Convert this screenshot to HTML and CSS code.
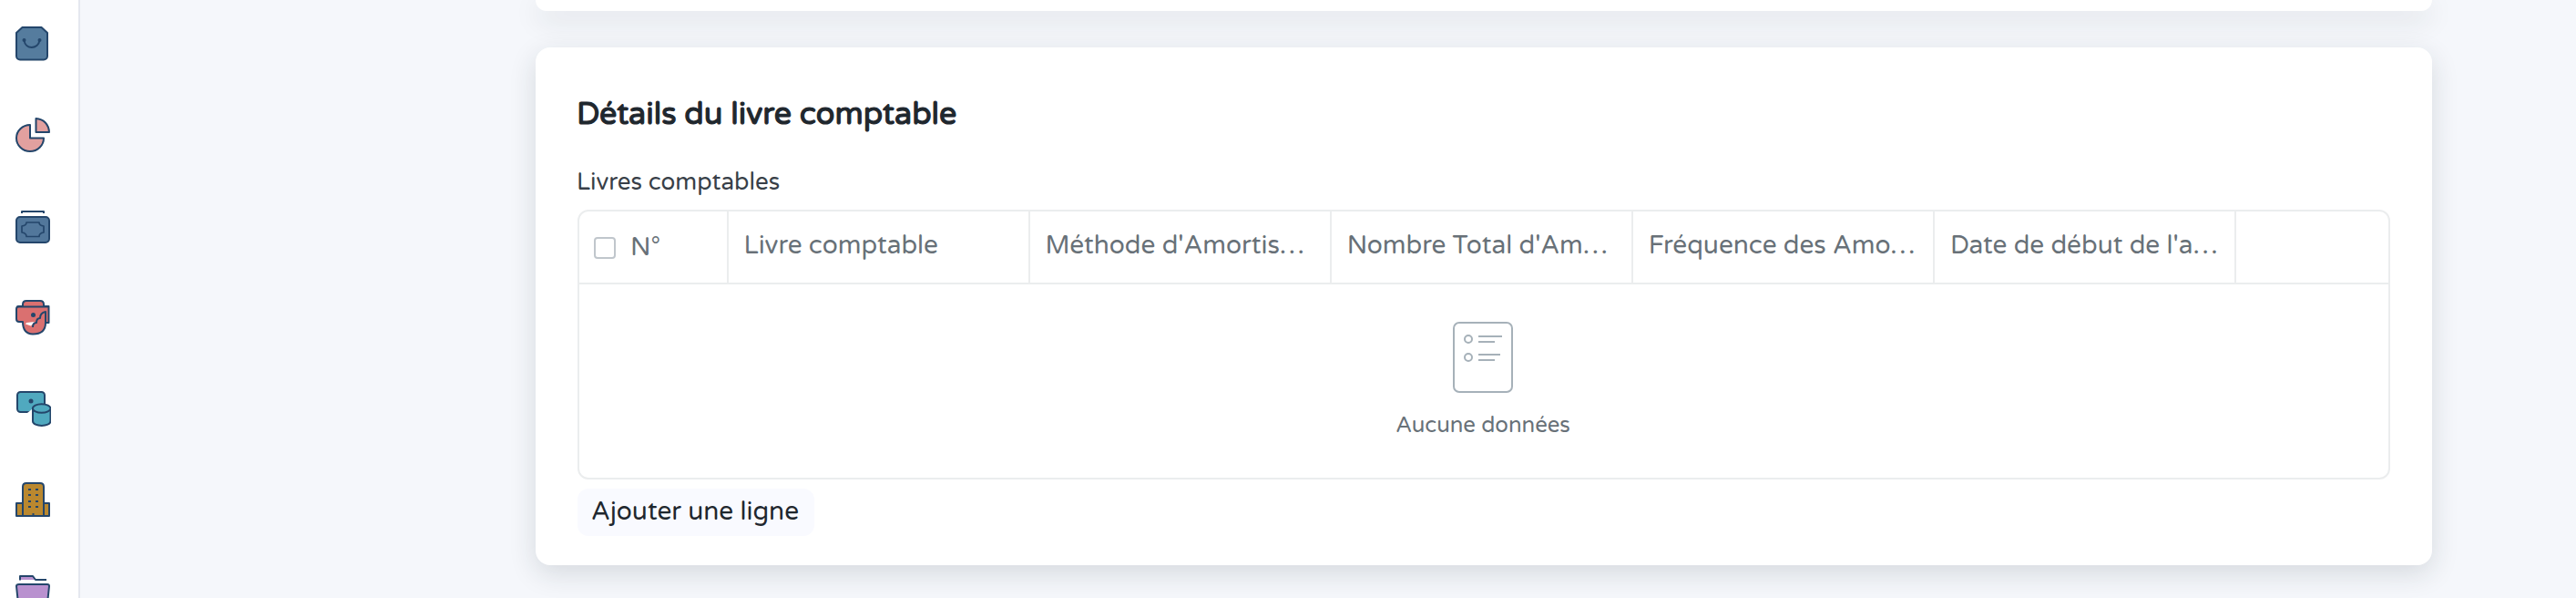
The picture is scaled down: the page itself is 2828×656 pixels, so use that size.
FILE: index.html
```html
<!DOCTYPE html>
<html lang="fr">
<head>
<meta charset="utf-8">
<title>Détails du livre comptable</title>
<link rel="stylesheet" href="styles.css">
</head>
<body>
<div class="app">
  <nav class="sidebar">
    <svg class="nav-icon" viewBox="0 0 40 40"><path fill="#557c9e" d="M8.500 2h21L36 8v25.500a4 4 0 0 1-4 4H6a4 4 0 0 1-4-4V8z"/><path fill="none" d="M10.500 16c1 10.500 15.500 10.500 17 0"/><circle class="dot" cx="10.500" cy="16" r="2"/><circle class="dot" cx="27.500" cy="16" r="2"/></svg>
    <svg class="nav-icon" viewBox="0 0 40 40"><path fill="#e2a09f" d="M17 9v14.500h15A15 14.500 0 1 1 17 9z"/><path fill="#e2a09f" d="M23.500 2v15H38C37.500 8.500 32 2.500 23.500 2z"/></svg>
    <svg class="nav-icon" viewBox="0 0 40 40"><path fill="none" d="M8 6V4h24v2"/><rect fill="#52779b" x="2" y="10" width="36" height="28" rx="4"/><path fill="none" stroke-width="1.700" d="M13 16h14q0 3.500 5 4v7q-5 .500-5 4.500H13q0-4-5-4.500v-7q5-.500 5-4z"/></svg>
    <svg class="nav-icon" viewBox="0 0 40 40"><path fill="#da7070" d="M9 8V6q0-4 4-4h15q4 0 4 4v2h5.500v18H34q0 12.500-14 12.500Q9 38 9 25H5q-3 0-3-3V11q0-3 3-3z"/><path fill="#fff" stroke="none" d="M13 26l9-1-4 4.500-6-2z"/><path fill="none" d="M20 31c0-3 1-5 4-5 0-3 1-5 4-5 0-3 1-6 6-7v12M2.500 8.500H37"/><circle class="dot" cx="20.500" cy="17.500" r="2.500"/></svg>
    <svg class="nav-icon" viewBox="0 0 40 40"><rect fill="#50a9bf" x="3" y="2" width="30" height="22" rx="3.500"/><path fill="#fff" stroke="none" d="M14 25l5-4v5z"/><circle class="dot" cx="18" cy="12" r="2.500"/><path fill="#50a9bf" d="M20 20v14c0 6.500 19.500 6.500 19.500 0V20"/><ellipse fill="#50a9bf" cx="29.700" cy="20" rx="9.800" ry="4.800"/></svg>
    <svg class="nav-icon" viewBox="0 0 40 40"><path fill="#ba882f" d="M2 38V24h6l1-1h22l1 1h6v14z"/><path fill="#ba882f" d="M9 38V6q0-4 4-4h15q4 0 4 4v32z"/><path fill="none" d="M15 9h3M23 9h3M15 15h3M23 15h3M15 22h3M23 22h3M15 28h3M23 28h3M20.500 35v3"/></svg>
    <svg class="nav-icon" viewBox="0 0 40 40"><path fill="#b991cf" stroke="none" d="M6 4h14l3.500 4H6z"/><path fill="none" d="M6 8.500V4h14l3 4h12"/><path fill="#b991cf" d="M5 13h31q2 0 2 2l-2 19q0 4-4 4H8q-4 0-4-4L2 15q0-2 3-2z"/></svg>
  </nav>
  <main class="content">
    <section class="card card-previous"></section>
    <section class="card">
      <h2 class="title">Détails du livre comptable</h2>
      <div class="label">Livres comptables</div>
      <div class="grid">
        <div class="grid-head">
          <div class="cell cell-index"><span class="checkbox"></span><span>N°</span></div>
          <div class="cell">Livre comptable</div>
          <div class="cell">Méthode d'Amortis…</div>
          <div class="cell">Nombre Total d'Am…</div>
          <div class="cell">Fréquence des Amo…</div>
          <div class="cell">Date de début de l'a…</div>
          <div class="cell cell-last"></div>
        </div>
        <div class="grid-empty">
          <svg class="empty-icon" viewBox="0 0 66 78"><rect x="1" y="1" width="64" height="76" rx="6"/><circle cx="17" cy="19" r="4"/><circle cx="17" cy="39" r="4"/><path d="M28 16h26M28 22h18M28 36h24M28 42h18"/></svg>
          <span>Aucune données</span>
        </div>
      </div>
      <button class="add-row">Ajouter une ligne</button>
    </section>
  </main>
</div>
</body>
</html>
```
FILE: styles.css
```css
* { box-sizing: border-box; }
body {
  margin: 0;
  background: #f5f7fb;
  color: #1f272e;
  font-family: "Varela Round", "Noto Sans", sans-serif;
}
.app { display: flex; height: 656px; overflow: hidden; }
.sidebar {
  display: flex;
  flex: 0 0 88px;
  flex-direction: column;
  gap: 60px;
  padding: 28px 0 0 16px;
  background: #fff;
  border-right: 2px solid #e5e8ef;
}
.nav-icon {
  flex: none;
  width: 40px;
  height: 40px;
  stroke: #24466b;
  stroke-width: 2;
  stroke-linejoin: round;
}
.nav-icon .dot { fill: #24466b; stroke: none; }
.content {
  display: flex;
  flex: 1;
  flex-direction: column;
  gap: 40px;
  padding-left: 500px;
}
.card {
  flex: none;
  width: 2082px;
  height: 568px;
  padding: 49px 46px 0;
  background: #fff;
  border-radius: 16px;
  box-shadow: 0 9px 30px rgba(25, 39, 52, 0.14);
}
.card-previous { height: 12px; padding: 0; border-radius: 0 0 16px 16px; }
.title {
  height: 50px;
  margin: 0 0 0 -1px;
  font-size: 34px;
  font-weight: 400;
  line-height: 50px;
  white-space: nowrap;
  -webkit-text-stroke: 1.2px #1f272e;
}
.label {
  height: 40px;
  margin: 29px 0 10px -1px;
  color: #383f48;
  font-size: 26px;
  line-height: 40px;
  white-space: nowrap;
}
.grid {
  height: 296px;
  border: 2px solid #ebedee;
  border-radius: 12px;
}
.grid-head {
  display: grid;
  grid-template-columns: 164px repeat(5, 331.1px) 1fr;
  height: 80px;
  border-bottom: 2px solid #ebedee;
}
.cell {
  display: flex;
  align-items: center;
  padding: 0 0 4px 16.500px;
  border-right: 2px solid #ebedee;
  color: #687178;
  font-size: 28px;
  line-height: 38px;
  white-space: nowrap;
}
.cell-index { gap: 16px; padding: 0 0 0 16px; }
.cell-last { border-right: 0; }
.checkbox {
  width: 24px;
  height: 24px;
  margin-top: 2px;
  border: 2px solid #c0c6cc;
  border-radius: 4px;
}
.grid-empty {
  display: flex;
  flex-direction: column;
  align-items: center;
  gap: 19px;
  padding: 41px 2px 0 0;
  color: #687178;
  font-size: 24px;
  line-height: 34px;
}
.empty-icon {
  width: 66px;
  height: 78px;
  fill: none;
  stroke: #a6b1b9;
  stroke-width: 2;
}
.add-row {
  display: block;
  width: 260px;
  height: 52px;
  margin: 10px 0 0;
  padding: 0 0 1px 15px;
  background: #f9faff;
  border: 0;
  border-radius: 12px;
  color: #1f272e;
  font: 28px/49px "Varela Round", "Noto Sans", sans-serif;
  text-align: left;
  white-space: nowrap;
}
```
